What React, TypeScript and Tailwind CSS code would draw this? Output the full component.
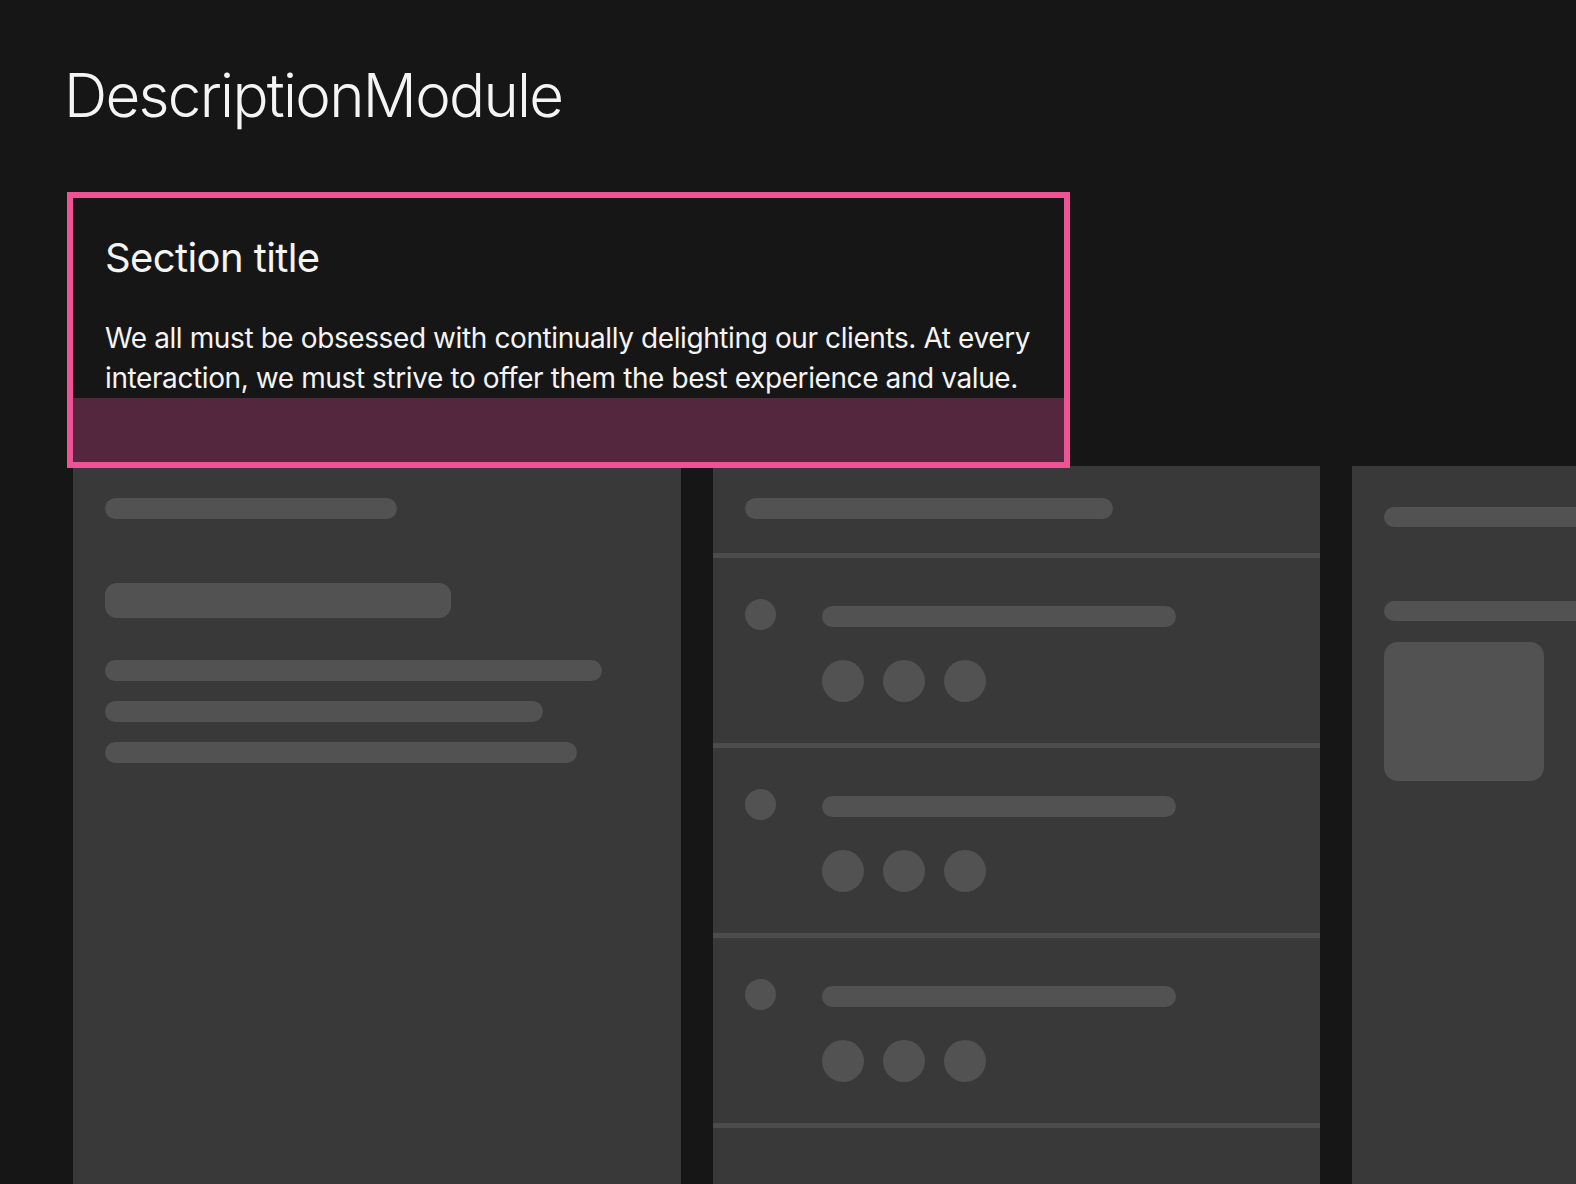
import React from 'react';

const font = { fontFamily: 'Inter, "Noto Sans", sans-serif' };

function Bar({ w, h = 'h-[21px]' }: { w: string; h?: string }) {
  return <div className={`${w} ${h} rounded-full bg-[#525252]`} />;
}

function Row() {
  return (
    <>
      <div className="flex gap-[46px] px-[32px] pt-[41px] pb-[41px]">
        <div className="w-[31px] h-[31px] rounded-full bg-[#525252] shrink-0" />
        <div className="flex flex-col">
          <div className="mt-[7px] w-[354px] h-[21px] rounded-full bg-[#525252]" />
          <div className="mt-[33px] flex gap-[19px]">
            <div className="w-[42px] h-[42px] rounded-full bg-[#525252]" />
            <div className="w-[42px] h-[42px] rounded-full bg-[#525252]" />
            <div className="w-[42px] h-[42px] rounded-full bg-[#525252]" />
          </div>
        </div>
      </div>
      <div className="h-[5px] bg-[#4c4c4c]" />
    </>
  );
}

export default function App() {
  return (
    <div className="w-[1576px] h-[1184px] overflow-hidden bg-[#161616] text-[#f4f4f4]" style={font}>
      <h1 className="pl-[64px] pt-[65px] text-[60px] leading-[60px] font-light tracking-[-1.7px]">DescriptionModule</h1>

      <div className="pl-[73px] pt-[73px]">
        {/* module under inspection */}
        <div className="relative z-10 w-[991px] bg-[#161616] outline-[6px] outline-solid outline-[#ee5396]">
          <div className="pl-[32px] pr-[20px] pt-[36px]">
            <h2 className="text-[40px] leading-[48px] font-normal tracking-[-0.6px]">Section title</h2>
            <p className="mt-[36px] text-[28px] leading-[40px] tracking-[-0.4px]">
              We all must be obsessed with continually delighting our clients. At every interaction, we must strive to offer them the best experience and value.
            </p>
          </div>
          <div className="h-[64px] bg-[#55273e]" />
        </div>

        {/* skeleton page */}
        <div className="mt-[4px] flex gap-[32px]">
          <div className="w-[608px] h-[720px] shrink-0 bg-[#393939] px-[32px] pt-[32px]">
            <Bar w="w-[292px]" />
            <div className="mt-[64px] w-[346px] h-[35px] rounded-[12px] bg-[#525252]" />
            <div className="mt-[42px] flex flex-col gap-[20px]">
              <Bar w="w-[497px]" />
              <Bar w="w-[438px]" />
              <Bar w="w-[472px]" />
            </div>
          </div>

          <div className="w-[607px] h-[720px] shrink-0 bg-[#393939]">
            <div className="px-[32px] pt-[32px] pb-[34px]">
              <Bar w="w-[368px]" />
            </div>
            <div className="h-[5px] bg-[#4c4c4c]" />
            <Row />
            <Row />
            <Row />
          </div>

          <div className="w-[608px] h-[720px] shrink-0 bg-[#393939] px-[32px] pt-[41px]">
            <Bar w="w-[420px]" h="h-[20px]" />
            <div className="mt-[74px] w-[420px] h-[20px] rounded-full bg-[#525252]" />
            <div className="mt-[21px] w-[160px] h-[139px] rounded-[14px] bg-[#525252]" />
          </div>
        </div>
      </div>
    </div>
  );
}
